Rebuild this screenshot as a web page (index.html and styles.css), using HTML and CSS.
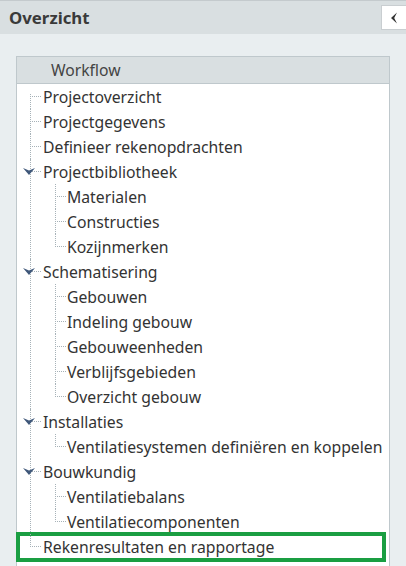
FILE: index.html
```html
<!DOCTYPE html>
<html>
<head>
<meta charset="utf-8">
<link rel="stylesheet" href="styles.css">
</head>
<body>
<div class="topbar">
  <h1 class="title">Overzicht</h1>
  <button class="collapse" aria-label="Inklappen">
    <svg width="8" height="12" viewBox="0 0 8 12"><path d="M7 0.5 L1 6 L7 11.5 L4.2 6 Z" fill="#333"/></svg>
  </button>
</div>
<div class="content">
  <div class="panel">
    <div class="panel-head">Workflow</div>
    <ul class="tree lvl1">
      <li class="node"><span class="label">Projectoverzicht</span></li>
      <li class="node"><span class="label">Projectgegevens</span></li>
      <li class="node"><span class="label">Definieer rekenopdrachten</span></li>
      <li class="node open"><span class="label"><svg class="chev" width="12" height="7" viewBox="0 0 12 7"><path d="M0 0 L6 2.4 L12 0 L6 7 Z" fill="#40587a"/></svg>Projectbibliotheek</span>
        <ul class="tree lvl2">
          <li class="node"><span class="label">Materialen</span></li>
          <li class="node"><span class="label">Constructies</span></li>
          <li class="node"><span class="label">Kozijnmerken</span></li>
        </ul>
      </li>
      <li class="node open"><span class="label"><svg class="chev" width="12" height="7" viewBox="0 0 12 7"><path d="M0 0 L6 2.4 L12 0 L6 7 Z" fill="#40587a"/></svg>Schematisering</span>
        <ul class="tree lvl2">
          <li class="node"><span class="label">Gebouwen</span></li>
          <li class="node"><span class="label">Indeling gebouw</span></li>
          <li class="node"><span class="label">Gebouweenheden</span></li>
          <li class="node"><span class="label">Verblijfsgebieden</span></li>
          <li class="node"><span class="label">Overzicht gebouw</span></li>
        </ul>
      </li>
      <li class="node open"><span class="label"><svg class="chev" width="12" height="7" viewBox="0 0 12 7"><path d="M0 0 L6 2.4 L12 0 L6 7 Z" fill="#40587a"/></svg>Installaties</span>
        <ul class="tree lvl2">
          <li class="node"><span class="label">Ventilatiesystemen definiëren en koppelen</span></li>
        </ul>
      </li>
      <li class="node open"><span class="label"><svg class="chev" width="12" height="7" viewBox="0 0 12 7"><path d="M0 0 L6 2.4 L12 0 L6 7 Z" fill="#40587a"/></svg>Bouwkundig</span>
        <ul class="tree lvl2">
          <li class="node"><span class="label">Ventilatiebalans</span></li>
          <li class="node"><span class="label">Ventilatiecomponenten</span></li>
        </ul>
      </li>
      <li class="node highlight"><span class="label">Rekenresultaten en rapportage</span><span class="hl-box"></span></li>
    </ul>
  </div>
</div>
</body>
</html>
```
FILE: styles.css
```css
html, body {
  margin: 0;
  padding: 0;
  height: 100%;
  overflow: hidden;
}
body {
  background: #e9eef0;
  font-family: "Noto Sans", "Open Sans", sans-serif;
  color: #333;
}
.topbar {
  height: 33px;
  border-top: 1px solid #c4cacd;
  background: #d9dfe1;
  display: flex;
  align-items: center;
  justify-content: space-between;
  padding-left: 9px;
}
.title {
  margin: 0;
  font-size: 16.8px;
  font-weight: bold;
  color: #3a3a3a;
  line-height: 20px;
}
.collapse {
  width: 25px;
  height: 25px;
  padding: 0;
  margin: 0;
  border: 1px solid #c9ced1;
  border-right: none;
  background: #fff;
  display: flex;
  align-items: center;
  justify-content: center;
}
.content {
  padding: 22px 16px 0 16px;
}
.panel {
  border: 1px solid #bfc8cc;
  background: #fff;
  height: 600px;
}
.panel-head {
  height: 26px;
  line-height: 26px;
  background: #d9dfe1;
  border-bottom: 1px solid #bfc8cc;
  padding-left: 34px;
  font-size: 15.7px;
  color: #444;
}
.tree {
  list-style: none;
  margin: 0;
  padding: 0;
}
.node {
  position: relative;
}
.label {
  display: flex;
  align-items: center;
  height: 25px;
  font-size: 15.75px;
  white-space: nowrap;
  position: relative;
}
.lvl1 > .node > .label { padding-left: 26px; }
.lvl2 > .node > .label { padding-left: 50px; }

/* dotted connector lines */
.lvl1 > .node::before,
.lvl2 > .node::before {
  content: "";
  position: absolute;
  top: 12px;
  width: 11px;
  border-top: 1px dotted #a7b2b8;
}
.lvl1 > .node::before { left: 13px; }
.lvl2 > .node::before { left: 38px; }
.lvl1 > .node::after,
.lvl2 > .node::after {
  content: "";
  position: absolute;
  top: 0;
  bottom: 0;
  border-left: 1px dotted #a7b2b8;
}
.lvl1 > .node::after { left: 13px; }
.lvl2 > .node::after { left: 38px; }
.lvl1 > .node:first-child::after { top: 10px; }
.lvl1 > .node:last-child::after,
.lvl2 > .node:last-child::after { bottom: auto; height: 13px; }

.chev {
  position: absolute;
  left: 6px;
  top: 9px;
  z-index: 1;
}
.hl-box {
  position: absolute;
  left: -1px;
  right: 3px;
  top: -2px;
  bottom: -3px;
  border: 4px solid #1a9e42;
  box-sizing: border-box;
}
```
